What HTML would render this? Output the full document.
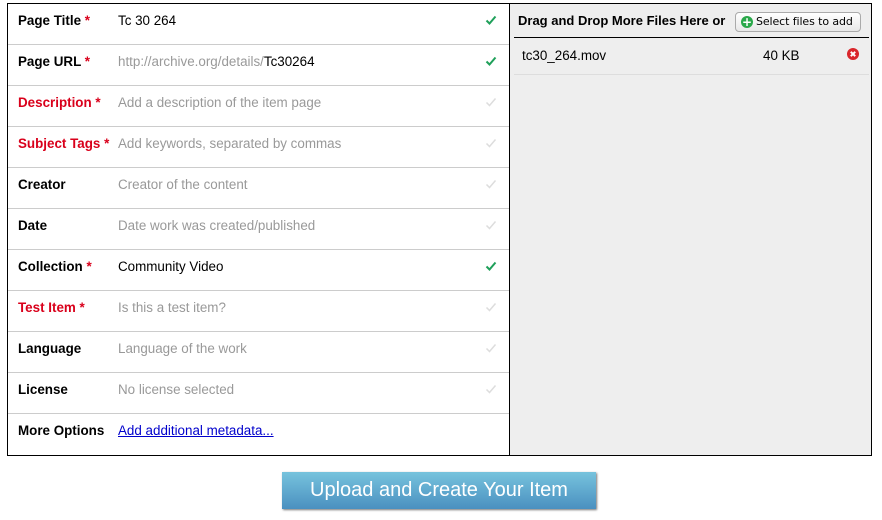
<!DOCTYPE html>
<html><head><style>
body{margin:0;width:882px;height:520px;background:#fff;font-family:"Liberation Sans",sans-serif;position:relative;overflow:hidden}
.box{position:absolute;left:7px;top:3px;width:863px;height:451px;border:1px solid #000}
.left{position:absolute;left:0;top:0;width:501px;height:451px;border-right:1px solid #000}
.row{position:absolute;left:0;width:501px;height:40px;border-bottom:1px solid #ccc;font-size:13.4px}
.lab{position:absolute;left:10px;top:9px;font-weight:bold;color:#000}
.lab.r{color:#d9001b}
.lab i{font-style:normal;color:#d9001b}
.val{position:absolute;left:110px;top:9px;color:#999}
.val.b{color:#000}
.chk{position:absolute;left:477px;top:10px;width:12px;height:12px}
a{color:#00c;text-decoration:underline}
.right{position:absolute;left:502px;top:0;width:361px;height:451px;background:#eee}
.hdr{position:absolute;left:4px;top:0;width:355px;height:33px;border-bottom:1px solid #000;font-size:13px;font-weight:bold}
.hdr span{position:absolute;left:4px;top:9px}
.btn{position:absolute;left:221px;top:8px;width:124px;height:18px;border:1px solid #aaa;border-radius:4px;background:linear-gradient(#fff,#e8e8e8);font-weight:normal;font-size:11px;font-family:"DejaVu Sans",sans-serif;letter-spacing:-.1px}
.btn b{position:absolute;left:5px;top:3px;width:12px;height:12px;border-radius:50%;background:#2aa84a;color:#fff;font-size:12px;line-height:12px;text-align:center}
.btn em{position:absolute;left:20px;top:2px;font-style:normal}
.file{position:absolute;left:4px;top:34px;width:355px;height:36px;border-bottom:1px solid #ddd;font-size:13.4px}
.up{position:absolute;left:282px;top:472px;width:314px;height:37px;background:linear-gradient(#77c3dd,#4a90c0);box-shadow:1px 1px 2px #777;color:#fff;font-size:20px;text-align:center;line-height:36px}
</style></head><body>
<div class="box">
<div class="left">
<div class="row" style="top:0"><span class="lab">Page Title <i>*</i></span><span class="val b">Tc 30 264</span><svg class="chk" viewBox="0 0 12 12"><path d="M1.5 6.5L4.5 9.5L10.5 2.5" stroke="#1fa05a" stroke-width="2" fill="none"/></svg></div>
<div class="row" style="top:41px"><span class="lab">Page URL <i>*</i></span><span class="val">http://archive.org/details/<span style="color:#000">Tc30264</span></span><svg class="chk" viewBox="0 0 12 12"><path d="M1.5 6.5L4.5 9.5L10.5 2.5" stroke="#1fa05a" stroke-width="2" fill="none"/></svg></div>
<div class="row" style="top:82px"><span class="lab r">Description *</span><span class="val">Add a description of the item page</span><svg class="chk" viewBox="0 0 12 12"><path d="M1.5 6.5L4.5 9.5L10.5 2.5" stroke="#ddd" stroke-width="1.5" fill="none"/></svg></div>
<div class="row" style="top:123px"><span class="lab r">Subject Tags *</span><span class="val">Add keywords, separated by commas</span><svg class="chk" viewBox="0 0 12 12"><path d="M1.5 6.5L4.5 9.5L10.5 2.5" stroke="#ddd" stroke-width="1.5" fill="none"/></svg></div>
<div class="row" style="top:164px"><span class="lab">Creator</span><span class="val">Creator of the content</span><svg class="chk" viewBox="0 0 12 12"><path d="M1.5 6.5L4.5 9.5L10.5 2.5" stroke="#ddd" stroke-width="1.5" fill="none"/></svg></div>
<div class="row" style="top:205px"><span class="lab">Date</span><span class="val">Date work was created/published</span><svg class="chk" viewBox="0 0 12 12"><path d="M1.5 6.5L4.5 9.5L10.5 2.5" stroke="#ddd" stroke-width="1.5" fill="none"/></svg></div>
<div class="row" style="top:246px"><span class="lab">Collection <i>*</i></span><span class="val b">Community Video</span><svg class="chk" viewBox="0 0 12 12"><path d="M1.5 6.5L4.5 9.5L10.5 2.5" stroke="#1fa05a" stroke-width="2" fill="none"/></svg></div>
<div class="row" style="top:287px"><span class="lab r">Test Item *</span><span class="val">Is this a test item?</span><svg class="chk" viewBox="0 0 12 12"><path d="M1.5 6.5L4.5 9.5L10.5 2.5" stroke="#ddd" stroke-width="1.5" fill="none"/></svg></div>
<div class="row" style="top:328px"><span class="lab">Language</span><span class="val">Language of the work</span><svg class="chk" viewBox="0 0 12 12"><path d="M1.5 6.5L4.5 9.5L10.5 2.5" stroke="#ddd" stroke-width="1.5" fill="none"/></svg></div>
<div class="row" style="top:369px"><span class="lab">License</span><span class="val">No license selected</span><svg class="chk" viewBox="0 0 12 12"><path d="M1.5 6.5L4.5 9.5L10.5 2.5" stroke="#ddd" stroke-width="1.5" fill="none"/></svg></div>
<div class="row" style="top:410px;border-bottom:none"><span class="lab">More Options</span><span class="val"><a>Add additional metadata...</a></span></div>
</div>
<div class="right">
<div class="hdr"><span>Drag and Drop More Files Here or</span><div class="btn"><b>+</b><em>Select files to add</em></div></div>
<div class="file"><span style="position:absolute;left:8px;top:10px">tc30_264.mov</span><span style="position:absolute;left:249px;top:10px">40 KB</span><svg style="position:absolute;left:333px;top:10px" width="12" height="12" viewBox="0 0 12 12"><circle cx="6" cy="6" r="6" fill="#d9262b"/><path d="M3.8 3.8L8.2 8.2M8.2 3.8L3.8 8.2" stroke="#fff" stroke-width="2"/></svg></div>
</div>
</div>
<div class="up">Upload and Create Your Item</div>
</body></html>
